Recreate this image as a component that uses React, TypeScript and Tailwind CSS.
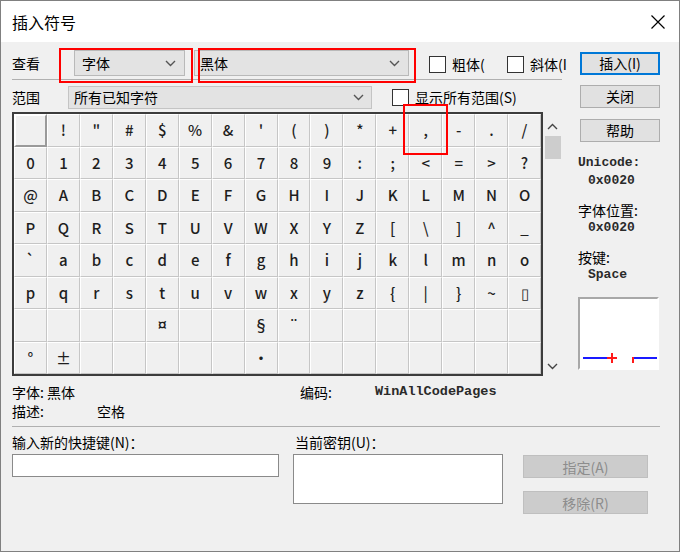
import React from "react";

const cjk = { fontFamily: '"Noto Sans CJK SC", "Liberation Sans", sans-serif' };
const mono = { fontFamily: '"Liberation Mono", "Noto Sans CJK SC", monospace' };

// character table rows (16 per row)
const rows: string[][] = [
  [" ", "!", "\"", "#", "$", "%", "&", "'", "(", ")", "*", "+", ",", "-", ".", "/"],
  "0123456789:;<=>?".split(""),
  "@ABCDEFGHIJKLMNO".split(""),
  "PQRSTUVWXYZ[\\]^_".split(""),
  "`abcdefghijklmno".split(""),
  [..."pqrstuvwxyz{|}~".split(""), "▯"],
  ["", "", "", "", "¤", "", "", "§", "¨", "", "", "", "", "", "", ""],
  ["°", "±", "", "", "", "", "", "·", "", "", "", "", "", "", "", ""],
];

function Chevron({ up = false, color = "#333" }: { up?: boolean; color?: string }) {
  return (
    <svg width="11" height="7" viewBox="0 0 11 7">
      <path
        d={up ? "M1 6L5.5 1.5L10 6" : "M1 1L5.5 5.5L10 1"}
        stroke={color}
        strokeWidth="1.4"
        fill="none"
      />
    </svg>
  );
}

function Combo({ text, width, pad }: { text: string; width: string; pad: string }) {
  return (
    <div
      className={`${width} h-[26px] bg-[#e3e3e3] border border-[#b9b9b9] flex items-center justify-between ${pad} pr-[8px] text-[14px] text-black`}
    >
      <span>{text}</span>
      <Chevron color="#555" />
    </div>
  );
}

function Check() {
  return <div className="w-[17px] h-[17px] bg-white border border-[#333] shrink-0" />;
}

function Btn({ label, focus = false, disabled = false, width = "w-[80px]" }: { label: string; focus?: boolean; disabled?: boolean; width?: string }) {
  return (
    <div
      className={`${width} h-[23px] flex items-center justify-center text-[14px] ${
        disabled
          ? "bg-[#cccccc] border border-[#bfbfbf] text-[#8d8d8d]"
          : focus
          ? "bg-[#e1e1e1] border-2 border-[#0078d7] text-black"
          : "bg-[#e1e1e1] border border-[#adadad] text-black"
      }`}
    >
      {label}
    </div>
  );
}

export default function App() {
  return (
    <div
      className="w-[680px] h-[552px] bg-[#f0f0f0] border border-[#808080] relative overflow-hidden flex flex-col"
      style={cjk}
    >
      {/* Title bar */}
      <div className="h-[41px] bg-white flex items-center justify-between pl-[11px] pr-[14px] shrink-0">
        <span className="text-[16px] text-black">插入符号</span>
        <svg width="14" height="14" viewBox="0 0 14 14">
          <path d="M0.5 0.5L13.5 13.5M13.5 0.5L0.5 13.5" stroke="#000" strokeWidth="1.2" />
        </svg>
      </div>

      {/* Body */}
      <div className="px-[11px] flex flex-col">
        <div className="flex">
          {/* Left column */}
          <div className="w-[550px] flex flex-col">
            {/* Row 1 */}
            <div className="mt-[5px] h-[33px] flex items-center border-b border-[#b0b0b0] whitespace-nowrap">
              <span className="w-[62px] text-[14px] text-black shrink-0">查看</span>
              <Combo text="字体" width="w-[111px] shrink-0" pad="pl-[7px]" />
              <div className="ml-[9px] shrink-0">
                <Combo text="黑体" width="w-[215px]" pad="pl-[5px]" />
              </div>
              <div className="ml-[20px] w-[78px] flex items-center shrink-0 mt-[3px]">
                <Check />
                <span className="ml-[6px] text-[14px] text-black">粗体(</span>
              </div>
              <div className="flex items-center shrink-0 mt-[3px]">
                <Check />
                <span className="ml-[6px] text-[14px] text-black">斜体(I</span>
              </div>
            </div>

            {/* Row 2 */}
            <div className="mt-[6px] h-[23px] flex items-center whitespace-nowrap">
              <span className="w-[56px] text-[14px] text-black shrink-0">范围</span>
              <div className="w-[304px] h-[23px] bg-[#e3e3e3] border border-[#c4c4c4] flex items-center justify-between pl-[5px] pr-[7px] text-[14px] text-black">
                <span>所有已知字符</span>
                <Chevron color="#555" />
              </div>
              <div className="ml-[20px]">
                <Check />
              </div>
              <span className="ml-[6px] text-[14px] text-black">显示所有范围(S)</span>
            </div>

            {/* Grid + scrollbar */}
            <div className="mt-[3px] flex">
              <div className="w-[531px] h-[264px] border-2 border-[#3c3c3c] bg-[#f0f0f0] grid grid-cols-16 grid-rows-8">
                {rows.map((row, r) =>
                  row.map((ch, c) => (
                    <div
                      key={`${r}-${c}`}
                      className={`flex items-center justify-center text-[15px] font-medium text-[#1e1e1e] ${
                        r === 0 && c === 0
                          ? "border-2 border-t-white border-l-white border-r-[#9a9a9a] border-b-[#9a9a9a]"
                          : "border border-t-white border-l-white border-r-[#c6c6c6] border-b-[#c6c6c6]"
                      }`}
                    >
                      {ch}
                    </div>
                  ))
                )}
              </div>
              <div className="w-[19px] h-[264px] flex flex-col items-center">
                <div className="mt-[11px]">
                  <Chevron up color="#444" />
                </div>
                <div className="mt-[6px] w-[16px] h-[23px] bg-[#cdcdcd]" />
                <div className="mt-auto mb-[6px]">
                  <Chevron color="#444" />
                </div>
              </div>
            </div>
          </div>

          {/* Right column */}
          <div className="ml-[18px] w-[80px] flex flex-col">
            <div className="mt-[10px]">
              <Btn label="插入(I)" focus />
            </div>
            <div className="mt-[10px]">
              <Btn label="关闭" />
            </div>
            <div className="mt-[11px]">
              <Btn label="帮助" />
            </div>
            <div className="ml-[-2px] flex flex-col text-[13px] text-[#2a2a2a] leading-[18px]">
              <span className="mt-[12px] font-bold" style={mono}>Unicode:</span>
              <span className="pl-[10px] font-bold" style={mono}>0x0020</span>
              <span className="mt-[11px] text-[14px] text-black">字体位置:</span>
              <span className="pl-[10px] font-bold" style={mono}>0x0020</span>
              <span className="mt-[11px] text-[14px] text-black">按键:</span>
              <span className="pl-[10px] font-bold" style={mono}>Space</span>
              <div className="mt-[13px] w-[81px] h-[73px] bg-white border-2 border-t-[#a8a8a8] border-l-[#a8a8a8] border-r-white border-b-white">
                <svg width="77" height="69" viewBox="0 0 77 69">
                  <path d="M3 59H30" stroke="#1a1aff" strokeWidth="2" />
                  <path d="M27 59H37M32 54V64" stroke="#ff1a1a" strokeWidth="2" />
                  <path d="M53 59H77" stroke="#1a1aff" strokeWidth="2" />
                  <path d="M53 58V64" stroke="#ff1a1a" strokeWidth="2" />
                </svg>
              </div>
            </div>
          </div>
        </div>

        {/* Info lines */}
        <div className="mt-[7px] flex flex-col text-[14px] text-black leading-[18px]">
          <div className="flex whitespace-nowrap">
            <span className="w-[288px]">字体: 黑体</span>
            <span className="w-[75px]">编码:</span>
            <span className="text-[13.5px] font-bold text-[#2a2a2a]" style={mono}>WinAllCodePages</span>
          </div>
          <div className="mt-[1px] flex">
            <span className="w-[85px]">描述:</span>
            <span>空格</span>
          </div>
        </div>

        <div className="mt-[6px] w-[648px] border-t border-[#b0b0b0]" />

        {/* Shortcut area */}
        <div className="mt-[6px] flex text-[14px] text-black leading-[18px]">
          <div className="w-[268px] flex flex-col">
            <span>输入新的快捷键(N)：</span>
            <div className="mt-[3px] w-[267px] h-[23px] bg-white border border-[#8a8a8a]" />
          </div>
          <div className="ml-[13px] w-[210px] flex flex-col">
            <span className="pl-[2px]">当前密钥(U)：</span>
            <div className="mt-[3px] w-[210px] h-[50px] bg-white border border-[#8a8a8a]" />
          </div>
          <div className="ml-[20px] pt-[22px] flex flex-col">
            <Btn label="指定(A)" disabled width="w-[125px]" />
            <div className="mt-[13px]">
              <Btn label="移除(R)" disabled width="w-[125px]" />
            </div>
          </div>
        </div>
      </div>

      {/* Red annotation boxes */}
      <div className="absolute left-[58px] top-[47px] w-[134px] h-[35px] border-2 border-[#ff0000]" />
      <div className="absolute left-[197px] top-[47px] w-[218px] h-[35px] border-2 border-[#ff0000]" />
      <div className="absolute left-[402px] top-[103px] w-[45px] h-[51px] border-2 border-[#ff0000]" />
    </div>
  );
}
